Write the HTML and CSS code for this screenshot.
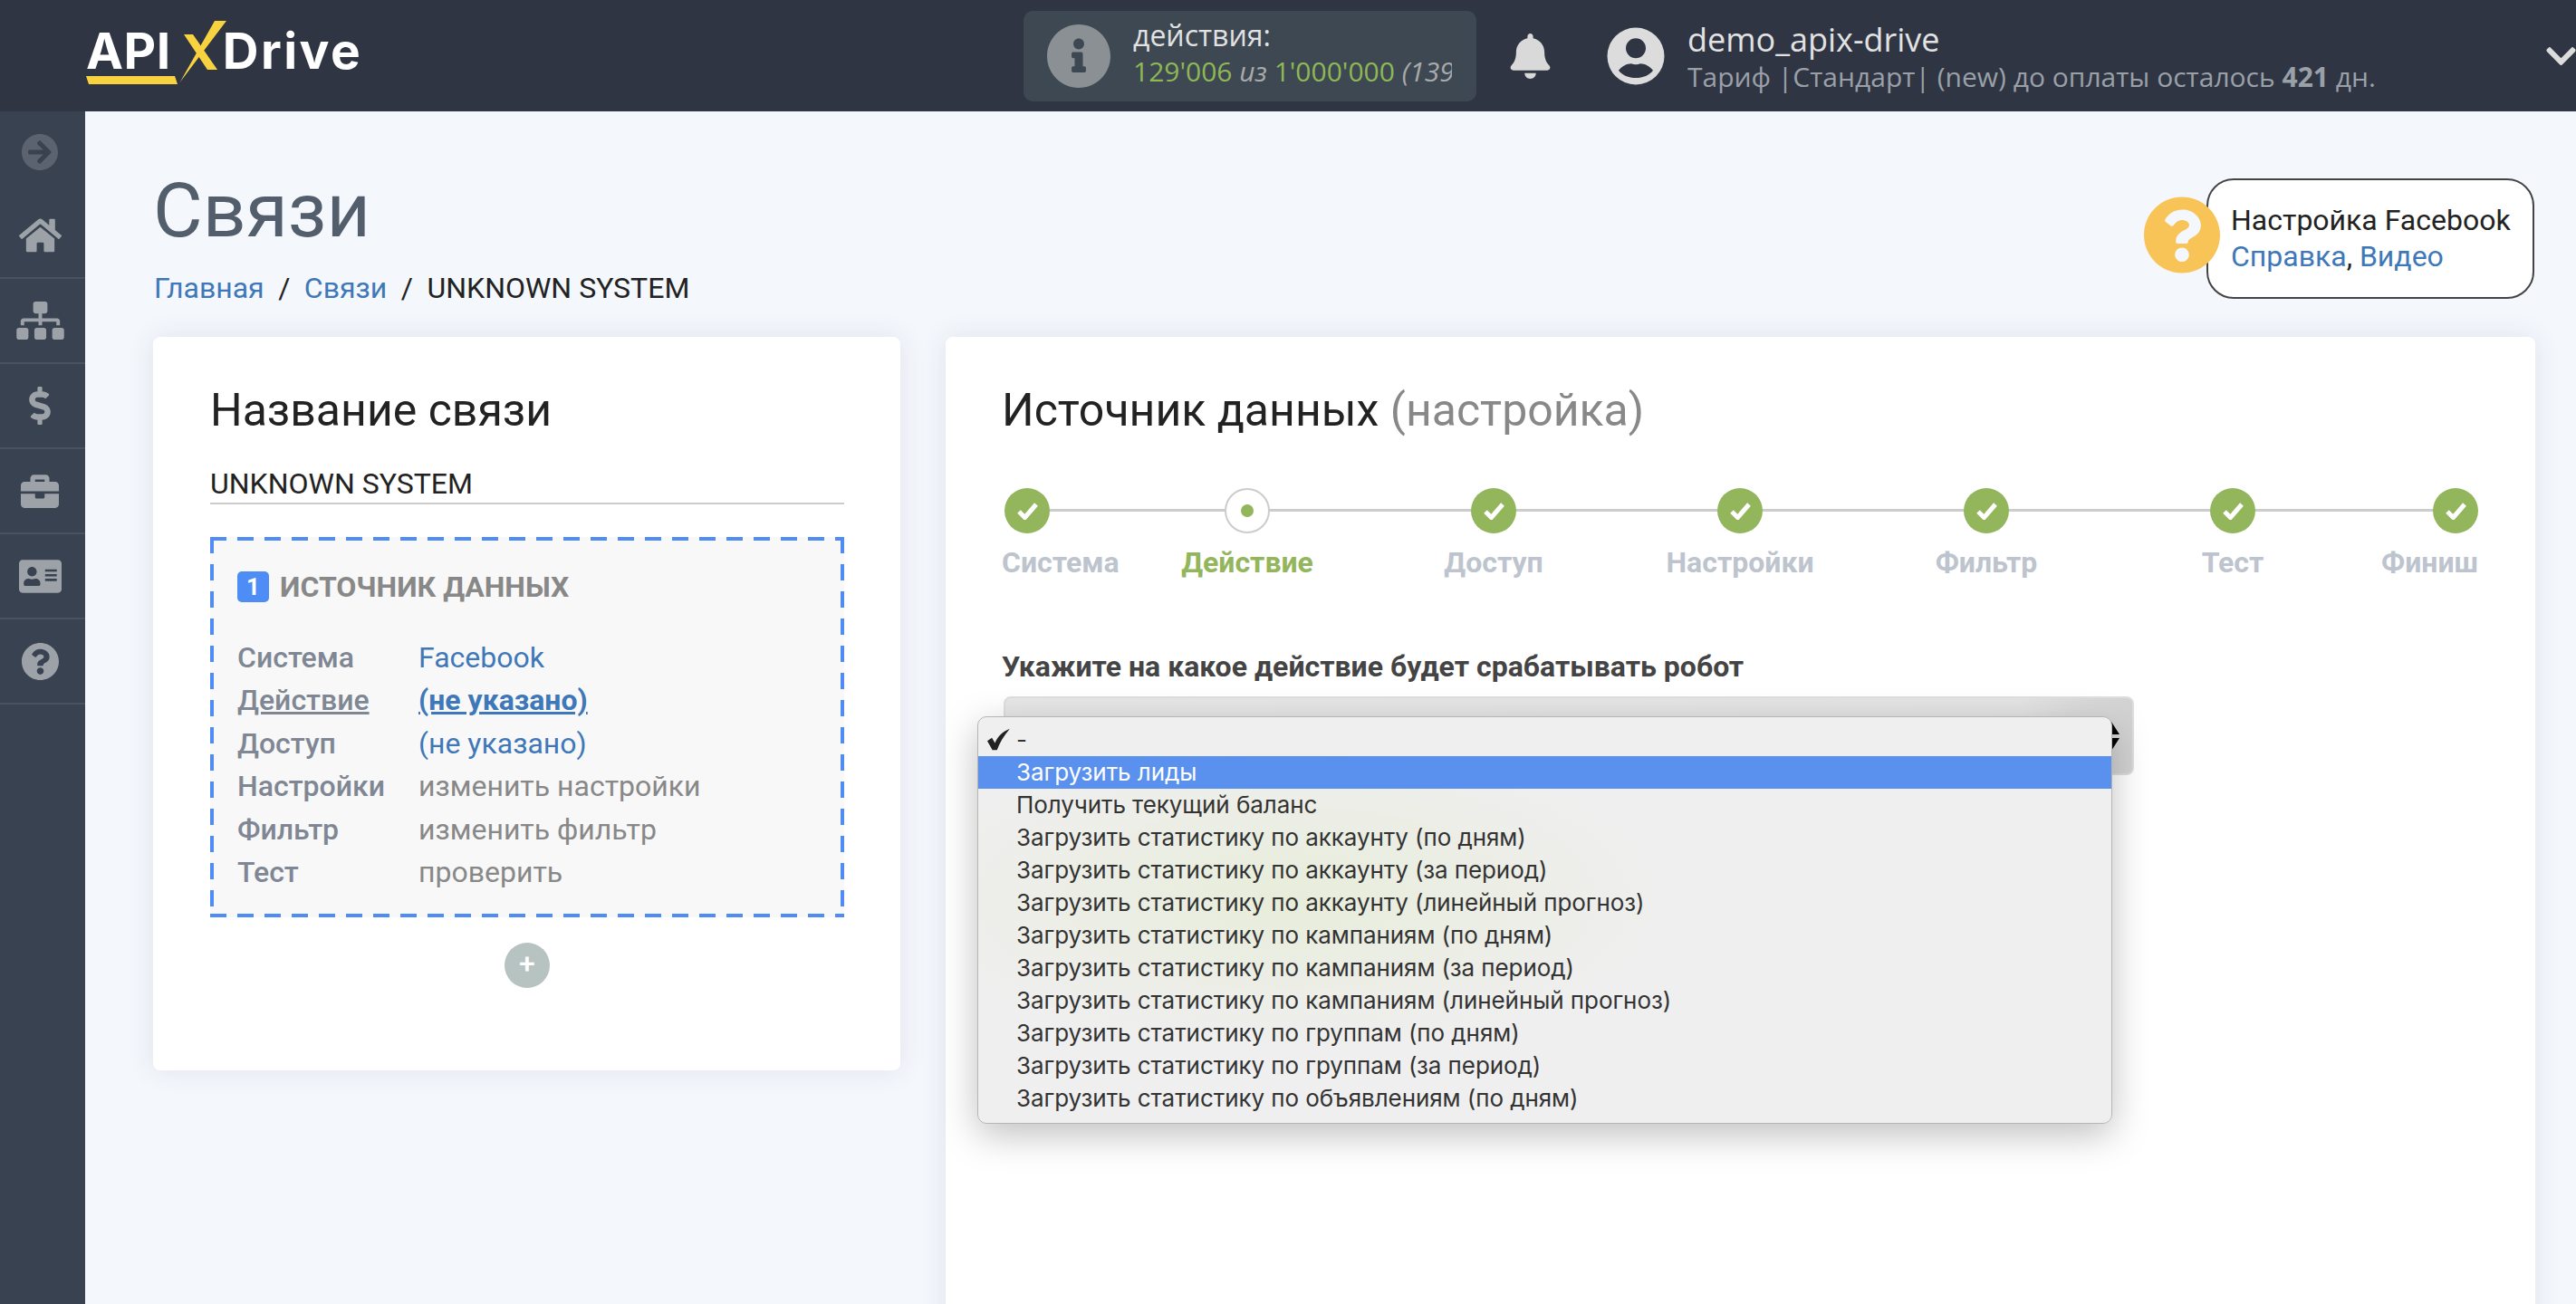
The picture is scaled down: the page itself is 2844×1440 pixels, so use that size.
FILE: index.html
```html
<!DOCTYPE html>
<html lang="ru">
<head>
<meta charset="utf-8">
<title>Связи</title>
<link rel="stylesheet" href="styles.css">
</head>
<body>
<header class="topbar">
  <div class="logo">
    <span class="logo-api">API</span>
    <svg class="logo-x" viewBox="0 0 160 72" aria-hidden="true">
      <polygon points="0,61 98,61 101,70 3,70" fill="#f9d33f"/>
      <polygon points="142,0 155,0 105,66 103,69" fill="#f9d33f"/>
      <polygon points="108,15 118,15 145,54 134,54" fill="#f9d33f"/>
    </svg>
    <span class="logo-drive">Drive</span>
  </div>
  <div class="actions">
    <svg class="actions-icon" viewBox="8 8 496 496"><path d="M256 8C119.043 8 8 119.083 8 256c0 136.997 111.043 248 248 248s248-111.003 248-248C504 119.083 392.957 8 256 8zm0 110c23.196 0 42 18.804 42 42s-18.804 42-42 42-42-18.804-42-42 18.804-42 42-42zm56 254c0 6.627-5.373 12-12 12h-88c-6.627 0-12-5.373-12-12v-24c0-6.627 5.373-12 12-12h12v-64h-12c-6.627 0-12-5.373-12-12v-24c0-6.627 5.373-12 12-12h64c6.627 0 12 5.373 12 12v100h12c6.627 0 12 5.373 12 12v24z"/></svg>
    <div class="actions-text">
      <div class="actions-title">действия:</div>
      <div class="actions-count"><span class="green">129'006</span> <i>из</i> <span class="green">1'000'000</span> <i>(139%)</i></div>
    </div>
  </div>
  <svg class="bell" viewBox="0 0 448 512"><path d="M224 512c35.32 0 63.97-28.65 63.97-64H160.03c0 35.35 28.65 64 63.97 64zm215.39-149.71c-19.32-20.76-55.47-51.99-55.47-154.29 0-77.7-54.48-139.9-127.94-155.16V32c0-17.67-14.32-32-31.98-32s-31.98 14.33-31.98 32v20.84C118.56 68.1 64.08 130.3 64.08 208c0 102.3-36.15 133.53-55.47 154.29-6 6.45-8.66 14.16-8.61 21.71.11 16.4 12.98 32 32.1 32h383.8c19.12 0 32-15.6 32.1-32 .05-7.55-2.61-15.27-8.61-21.71z"/></svg>
  <svg class="avatar" viewBox="0 0 64 64"><path fill-rule="evenodd" d="M32 .5a31.5 31.5 0 1 0 0 63 31.5 31.5 0 0 0 0-63zM32 12.3a11 11 0 1 1 0 22 11 11 0 0 1 0-22zM13 47.7C17 43 22 40.3 27 40.3q5 1.7 10 0C42 40.3 47 43 51 47.7 47 53 40 56 32 56 24 56 17 53 13 47.7z"/></svg>
  <div class="user">
    <div class="user-name">demo_apix-drive</div>
    <div class="user-plan">Тариф |Стандарт| (new) до оплаты осталось <b>421</b> дн.</div>
  </div>
  <svg class="chevron" viewBox="0 122 448 266" preserveAspectRatio="none"><path d="M207.029 381.476L12.686 187.132c-9.373-9.373-9.373-24.569 0-33.941l22.667-22.667c9.357-9.357 24.522-9.375 33.901-.04L224 284.505l154.745-154.021c9.379-9.335 24.544-9.317 33.901.04l22.667 22.667c9.373 9.373 9.373 24.569 0 33.941L240.971 381.476c-9.373 9.372-24.569 9.372-33.942 0z"/></svg>
</header>

<div class="shell">
  <nav class="sidebar">
    <div class="side-first">
      <svg class="ico-arrow" viewBox="8 8 496 496"><path d="M256 8c137 0 248 111 248 248S393 504 256 504 8 393 8 256 119 8 256 8zm-28.9 143.6l75.5 72.4H120c-13.3 0-24 10.7-24 24v16c0 13.3 10.7 24 24 24h182.6l-75.5 72.4c-9.7 9.3-9.9 24.8-.4 34.3l11 10.9c9.4 9.4 24.6 9.4 33.9 0L404.3 273c9.4-9.4 9.4-24.6 0-33.9L271.6 106.3c-9.4-9.4-24.6-9.4-33.9 0l-11 10.9c-9.5 9.6-9.3 25.1.4 34.4z"/></svg>
      <svg class="ico-home" viewBox="0 32 576 448"><path d="M280.37 148.26L96 300.11V464a16 16 0 0 0 16 16l112.06-.29a16 16 0 0 0 15.92-16V368a16 16 0 0 1 16-16h64a16 16 0 0 1 16 16v95.64a16 16 0 0 0 16 16.05L464 480a16 16 0 0 0 16-16V300L295.67 148.26a12.19 12.19 0 0 0-15.3 0zM571.6 251.47L488 182.56V44.05a12 12 0 0 0-12-12h-56a12 12 0 0 0-12 12v72.61L318.47 43a48 48 0 0 0-61 0L4.34 251.47a12 12 0 0 0-1.6 16.9l25.5 31A12 12 0 0 0 45.15 301l235.22-193.74a12.19 12.19 0 0 1 15.3 0L530.9 301a12 12 0 0 0 16.9-1.6l25.5-31a12 12 0 0 0-1.7-16.93z"/></svg>
    </div>
    <div class="side-item"><svg class="ico-map" viewBox="0 0 640 512"><path d="M128 352H32c-17.67 0-32 14.33-32 32v96c0 17.67 14.33 32 32 32h96c17.67 0 32-14.33 32-32v-96c0-17.67-14.33-32-32-32zm-24-80h192v48h48v-48h192v48h48v-57.59c0-21.17-17.23-38.41-38.41-38.41H344v-64h40c17.67 0 32-14.33 32-32V32c0-17.67-14.33-32-32-32H256c-17.67 0-32 14.33-32 32v96c0 17.67 14.33 32 32 32h40v64H94.41C73.23 224 56 241.23 56 262.41V320h48v-48zm264 80h-96c-17.67 0-32 14.33-32 32v96c0 17.67 14.33 32 32 32h96c17.67 0 32-14.33 32-32v-96c0-17.67-14.33-32-32-32zm240 0h-96c-17.67 0-32 14.33-32 32v96c0 17.67 14.33 32 32 32h96c17.67 0 32-14.33 32-32v-96c0-17.67-14.33-32-32-32z"/></svg></div>
    <div class="side-item"><svg class="ico-dollar" viewBox="0 0 288 512"><path d="M209.2 233.4l-108-31.6C88.7 198.2 80 186.5 80 173.5c0-16.3 13.2-29.5 29.5-29.5h66.3c12.2 0 24.2 3.7 34.2 10.5 6.1 4.1 14.3 3.1 19.5-2l34.8-34c7.1-6.9 6.1-18.4-1.8-24.5C238 74.8 207.4 64.1 176 64V16c0-8.8-7.2-16-16-16h-32c-8.8 0-16 7.2-16 16v48h-2.5C45.8 64-5.4 118.7.5 183.6c4.2 46.1 39.4 83.6 83.8 96.6l102.5 30c12.5 3.7 21.2 15.3 21.2 28.3 0 16.3-13.2 29.5-29.5 29.5h-66.3C100 368 88 364.3 78 357.5c-6.1-4.1-14.3-3.1-19.5 2l-34.8 34c-7.1 6.9-6.1 18.4 1.8 24.5 24.5 19.2 55.1 29.9 86.5 30v48c0 8.8 7.2 16 16 16h32c8.8 0 16-7.2 16-16v-48.2c46.6-.9 90.3-28.6 105.7-72.7 21.5-61.6-14.6-124.8-72.5-141.7z"/></svg></div>
    <div class="side-item"><svg class="ico-case" viewBox="0 32 512 448"><path d="M320 336c0 8.84-7.16 16-16 16h-96c-8.84 0-16-7.16-16-16v-48H0v144c0 25.6 22.4 48 48 48h416c25.6 0 48-22.4 48-48V288H320v48zm144-208h-80V80c0-25.6-22.4-48-48-48H176c-25.6 0-48 22.4-48 48v48H48c-25.6 0-48 22.4-48 48v80h512v-80c0-25.6-22.4-48-48-48zm-144 0H192V96h128v32z"/></svg></div>
    <div class="side-item"><svg class="ico-card" viewBox="0 32 576 448"><path d="M528 32H48C21.5 32 0 53.5 0 80v352c0 26.5 21.5 48 48 48h480c26.5 0 48-21.5 48-48V80c0-26.5-21.5-48-48-48zm-352 96c35.3 0 64 28.7 64 64s-28.7 64-64 64-64-28.7-64-64 28.7-64 64-64zm112 236.8c0 10.6-10 19.2-22.4 19.2H86.4C74 384 64 375.4 64 364.8v-19.2c0-31.8 30.1-57.6 67.2-57.6h5c12.3 5.1 25.7 8 39.8 8s27.6-2.9 39.8-8h5c37.1 0 67.2 25.8 67.2 57.6v19.2zM512 312c0 4.4-3.6 8-8 8H360c-4.4 0-8-3.6-8-8v-16c0-4.4 3.6-8 8-8h144c4.4 0 8 3.6 8 8v16zm0-64c0 4.4-3.6 8-8 8H360c-4.4 0-8-3.6-8-8v-16c0-4.4 3.6-8 8-8h144c4.4 0 8 3.6 8 8v16zm0-64c0 4.4-3.6 8-8 8H360c-4.4 0-8-3.6-8-8v-16c0-4.4 3.6-8 8-8h144c4.4 0 8 3.6 8 8v16z"/></svg></div>
    <div class="side-item"><svg class="ico-help" viewBox="8 8 496 496"><path d="M504 256c0 136.997-111.043 248-248 248S8 392.997 8 256C8 119.083 119.043 8 256 8s248 111.083 248 248zM262.655 90c-54.497 0-89.255 22.957-116.549 63.758-3.536 5.286-2.353 12.415 2.715 16.258l34.699 26.31c5.205 3.947 12.621 3.008 16.665-2.122 17.864-22.658 30.113-35.797 57.303-35.797 20.429 0 45.698 13.148 45.698 32.958 0 14.976-12.363 22.667-32.534 33.976C247.128 238.528 216 254.941 216 296v4c0 6.627 5.373 12 12 12h56c6.627 0 12-5.373 12-12v-1.333c0-28.462 83.186-29.647 83.186-106.667 0-58.002-60.165-102-116.531-102zM256 338c-25.365 0-46 20.635-46 46 0 25.364 20.635 46 46 46s46-20.636 46-46c0-25.365-20.635-46-46-46z"/></svg></div>
  </nav>

  <main class="content">
    <div class="page-head">
      <div class="page-titles">
        <h1 class="page-title">Связи</h1>
        <div class="crumbs"><a class="link">Главная</a><span class="sep">/</span><a class="link">Связи</a><span class="sep">/</span><span>UNKNOWN SYSTEM</span></div>
      </div>
      <div class="help">
        <svg class="help-icon" viewBox="8 8 496 496"><circle cx="256" cy="256" r="180" fill="#f4f7fc"/><path fill="#f9c457" d="M504 256c0 136.997-111.043 248-248 248S8 392.997 8 256C8 119.083 119.043 8 256 8s248 111.083 248 248zM262.655 90c-54.497 0-89.255 22.957-116.549 63.758-3.536 5.286-2.353 12.415 2.715 16.258l34.699 26.31c5.205 3.947 12.621 3.008 16.665-2.122 17.864-22.658 30.113-35.797 57.303-35.797 20.429 0 45.698 13.148 45.698 32.958 0 14.976-12.363 22.667-32.534 33.976C247.128 238.528 216 254.941 216 296v4c0 6.627 5.373 12 12 12h56c6.627 0 12-5.373 12-12v-1.333c0-28.462 83.186-29.647 83.186-106.667 0-58.002-60.165-102-116.531-102zM256 338c-25.365 0-46 20.635-46 46 0 25.364 20.635 46 46 46s46-20.636 46-46c0-25.365-20.635-46-46-46z"/></svg>
        <div class="help-box">
          <div>Настройка Facebook</div>
          <div><a class="link">Справка</a>, <a class="link">Видео</a></div>
        </div>
      </div>
    </div>

    <div class="cards">
      <section class="card card-left">
        <h2 class="card-title">Название связи</h2>
        <div class="name-field">UNKNOWN SYSTEM</div>
        <div class="source">
          <div class="source-head"><span class="badge">1</span><span class="source-title">ИСТОЧНИК ДАННЫХ</span></div>
          <dl class="rows">
            <dt>Система</dt><dd class="link">Facebook</dd>
            <dt class="under">Действие</dt><dd class="link under strong">(не указано)</dd>
            <dt>Доступ</dt><dd class="link">(не указано)</dd>
            <dt>Настройки</dt><dd>изменить настройки</dd>
            <dt>Фильтр</dt><dd>изменить фильтр</dd>
            <dt>Тест</dt><dd>проверить</dd>
          </dl>
        </div>
        <div class="add"><span class="add-btn">+</span></div>
      </section>

      <section class="card card-right">
        <h2 class="card-title">Источник данных <span class="muted">(настройка)</span></h2>
        <div class="steps">
          <div class="step step-first"><span class="dot"><svg viewBox="0 0 25 19"><polyline points="3,10 9.5,16.5 22,2"/></svg></span><span class="step-label">Система</span></div>
          <div class="step step-active"><span class="dot"><i></i></span><span class="step-label">Действие</span></div>
          <div class="step"><span class="dot"><svg viewBox="0 0 25 19"><polyline points="3,10 9.5,16.5 22,2"/></svg></span><span class="step-label">Доступ</span></div>
          <div class="step"><span class="dot"><svg viewBox="0 0 25 19"><polyline points="3,10 9.5,16.5 22,2"/></svg></span><span class="step-label">Настройки</span></div>
          <div class="step"><span class="dot"><svg viewBox="0 0 25 19"><polyline points="3,10 9.5,16.5 22,2"/></svg></span><span class="step-label">Фильтр</span></div>
          <div class="step"><span class="dot"><svg viewBox="0 0 25 19"><polyline points="3,10 9.5,16.5 22,2"/></svg></span><span class="step-label">Тест</span></div>
          <div class="step step-last"><span class="dot"><svg viewBox="0 0 25 19"><polyline points="3,10 9.5,16.5 22,2"/></svg></span><span class="step-label">Финиш</span></div>
        </div>
        <div class="question">Укажите на какое действие будет срабатывать робот</div>
        <div class="select">
          <svg class="select-arrows" viewBox="0 0 18 32"><polygon points="9,0 18,14 0,14"/><polygon points="0,18 18,18 9,32"/></svg>
          <ul class="menu">
            <li class="checked"><svg class="tick" viewBox="0 0 23 21"><path d="M0 12l4.500-3 3 5C10 8 14 3 22 0 16 7 12 14 9.500 21H5z"/></svg>-</li>
            <li class="hot">Загрузить лиды</li>
            <li>Получить текущий баланс</li>
            <li>Загрузить статистику по аккаунту (по дням)</li>
            <li>Загрузить статистику по аккаунту (за период)</li>
            <li>Загрузить статистику по аккаунту (линейный прогноз)</li>
            <li>Загрузить статистику по кампаниям (по дням)</li>
            <li>Загрузить статистику по кампаниям (за период)</li>
            <li>Загрузить статистику по кампаниям (линейный прогноз)</li>
            <li>Загрузить статистику по группам (по дням)</li>
            <li>Загрузить статистику по группам (за период)</li>
            <li>Загрузить статистику по объявлениям (по дням)</li>
          </ul>
        </div>
      </section>
    </div>
  </main>
</div>
</body>
</html>
```

FILE: styles.css
```css
* { box-sizing: border-box; }
html, body { margin: 0; padding: 0; height: 1440px; overflow: hidden; }
body { font-family: Roboto, "Liberation Sans", sans-serif; background: #f4f7fc; color: #222; }

.topbar { height: 123px; background: #2f3543; display: flex; align-items: center; position: relative; }
.logo { width: 1130px; padding-left: 95px; display: flex; align-items: baseline; position: relative; height: 123px; padding-top: 26px; flex-shrink: 0; }
.logo-api, .logo-drive { font-family: Inter, Roboto, sans-serif; font-weight: 700; font-size: 55px; line-height: 60px; color: #fff; letter-spacing: 0.5px; }
.logo-drive { margin-left: 57px; letter-spacing: 2.5px; }
.logo-x { position: absolute; left: 95px; top: 23px; width: 160px; height: 72px; }

.actions { width: 500px; height: 100px; background: #3d4852; border-radius: 10px; display: flex; align-items: center; padding-left: 26px; flex-shrink: 0; }
.actions-icon { width: 70px; height: 70px; fill: #8a9094; flex-shrink: 0; }
.actions-text { margin-left: 25px; white-space: nowrap; font-family: "Open Sans", sans-serif; margin-top: -5px; }
.actions-title { font-size: 32px; line-height: 39px; color: #e2e2e2; }
.actions-count { font-size: 30px; line-height: 41px; color: #aaa; width: 352px; overflow: hidden; }
.green { color: #8fb855; }
.bell { width: 45px; height: 50px; fill: #d9d9d9; margin-left: 37px; flex-shrink: 0; }
.avatar { width: 64px; height: 64px; fill: #dcdcdc; margin-left: 62px; flex-shrink: 0; }
.user { margin-left: 25px; font-family: "Open Sans", sans-serif; white-space: nowrap; width: 948px; flex-shrink: 0; }
.user-name { font-size: 36px; line-height: 46px; color: #e2e2e2; }
.user-plan { font-size: 30px; line-height: 36px; color: #9aa0a8; }
.chevron { width: 33px; height: 20px; fill: #dcdcdc; position: absolute; left: 2811px; top: 52px; }

.shell { display: flex; height: 1317px; }
.sidebar { width: 94px; background: #394250; flex-shrink: 0; }
.side-first { height: 185px; border-bottom: 2px solid #4a5261; display: flex; flex-direction: column; align-items: center; padding: 25px 6px 0 0; }
.side-item { height: 94px; border-bottom: 2px solid #4a5261; display: flex; align-items: center; justify-content: center; padding-right: 6px; }
.sidebar svg { fill: #9da1a8; }
.sidebar .ico-arrow { width: 40px; height: 40px; fill: #5b6270; }
.ico-home { width: 47px; height: 38px; margin-top: 53px; }
.ico-map { width: 53px; height: 42px; }
.ico-dollar { width: 24px; height: 42px; }
.ico-case { width: 42px; height: 37px; }
.ico-card { width: 47px; height: 37px; }
.ico-help { width: 41px; height: 41px; }

.content { flex: 1; padding: 0 45px 0 75px; min-width: 0; }
.page-head { height: 249px; display: flex; justify-content: space-between; position: relative; }
.page-title { margin: 0; padding-top: 60px; font-size: 84px; line-height: 100px; font-weight: 400; color: #525e6b; }
.crumbs { margin-top: 15px; padding-left: 1px; font-size: 32px; line-height: 40px; color: #222; white-space: nowrap; }
.sep { margin: 0 15.5px; }
.link { color: #3f78b8; }

.help { display: flex; align-items: center; margin-top: 74px; height: 133px; margin-right: 1px; }
.help-icon { width: 84px; height: 85px; margin-right: -15px; position: relative; z-index: 1; margin-top: -8px; }
.help-box { width: 362px; height: 133px; border: 2px solid #444; border-radius: 30px; background: #fff; padding: 24px 0 0 25px; font-size: 32px; line-height: 40px; color: #222; white-space: nowrap; }

.cards { display: flex; gap: 50px; align-items: flex-start; }
.card { background: #fff; border-radius: 8px; box-shadow: 0 0 30px rgba(50, 60, 90, .10); }
.card-left { width: 825px; height: 810px; padding: 0 62px 0 63px; flex-shrink: 0; }
.card-right { flex: 1; height: 1100px; padding: 0 63px 0 65px; }
.card-title { margin: 0; padding-top: 51px; font-size: 50px; line-height: 60px; font-weight: 400; color: #222; white-space: nowrap; }
.card-right .card-title { margin-left: -3px; }
.muted { color: #888; }

.name-field { margin-top: 33px; height: 41px; border-bottom: 2px solid #ccc; font-size: 32px; line-height: 36px; color: #222; }
.source {
  margin-top: 36px; height: 420px; padding: 36px 30px 0; background-color: #f8f8f8;
  background-image:
    repeating-linear-gradient(90deg, #4f8cf3 0 18px, transparent 18px 30px),
    repeating-linear-gradient(90deg, #4f8cf3 0 18px, transparent 18px 30px),
    repeating-linear-gradient(180deg, #4f8cf3 0 18px, transparent 18px 30px),
    repeating-linear-gradient(180deg, #4f8cf3 0 18px, transparent 18px 30px);
  background-size: 100% 4px, 100% 4px, 4px 100%, 4px 100%;
  background-position: 0 0, 0 100%, 0 0, 100% 0;
  background-repeat: no-repeat;
}
.source-head { display: flex; align-items: center; height: 38px; }
.badge { width: 35px; height: 34px; border-radius: 5px; background: #4e8df5; color: #fff; font-weight: 700; font-size: 26px; line-height: 34px; text-align: center; margin-right: 12px; }
.source-title { font-size: 32px; font-weight: 700; color: #888; white-space: nowrap; }
.rows { margin: 36px 0 0; display: grid; grid-template-columns: 200px 1fr; grid-auto-rows: 47.4px; font-size: 32px; line-height: 47.4px; }
.rows dt { font-weight: 500; color: #7f8794; }
.rows dd { margin: 0; color: #888; }
.rows dd.link { color: #3f78b8; }
.under { text-decoration: underline; }
.strong { font-weight: 700; }
.add { display: flex; justify-content: center; margin-top: 28px; }
.add-btn { width: 50px; height: 50px; border-radius: 50%; background: #b6c3c1; color: #fff; font-size: 32px; line-height: 46px; text-align: center; font-weight: 500; }

.steps { position: relative; margin-top: 56px; display: grid; grid-template-columns: 132px repeat(5, 272px) 135px; }
.steps::before { content: ""; position: absolute; left: 10px; right: 10px; top: 23px; height: 3px; background: #ccc; }
.step { display: flex; flex-direction: column; align-items: center; position: relative; }
.step-first { align-items: flex-start; }
.step-first .step-label { margin-left: -3px; }
.step-last { align-items: flex-end; }
.dot { width: 50px; height: 50px; border-radius: 50%; background: #93b65d; display: flex; align-items: center; justify-content: center; }
.dot svg { width: 25px; height: 19px; fill: none; stroke: #fff; stroke-width: 5; }
.step-active .dot { background: #fff; border: 2px solid #ccc; }
.dot i { width: 14px; height: 14px; border-radius: 50%; background: #93b65d; }
.step-label { margin-top: 12px; font-size: 32px; line-height: 40px; font-weight: 700; color: #bdc4ce; white-space: nowrap; }
.step-active .step-label { color: #93b65d; }

.question { margin-top: 75px; margin-left: -3px; font-size: 32px; line-height: 40px; font-weight: 700; color: #444; white-space: nowrap; }
.select { position: relative; margin-top: 13px; margin-left: -1px; width: 1248px; height: 87px; border: 2px solid #dedede; border-radius: 8px; background: linear-gradient(90deg, #e7e7e7, #e4e4e4 90%, #d2d2d2); }
.select-arrows { position: absolute; right: 14px; top: 26px; width: 18px; height: 32px; fill: #000; }
.menu { position: absolute; left: -31px; top: 20px; width: 1253px; height: 450px; margin: 0; padding: 7px 0; list-style: none; border: 1px solid #b5b5b5; border-radius: 10px; background: radial-gradient(ellipse 420px 170px at 340px 200px, #e8edda, #efefef); box-shadow: 0 12px 40px rgba(0, 0, 0, .25); font-family: Inter, "Liberation Sans", sans-serif; font-size: 26px; letter-spacing: -0.07px; color: #333; }
.menu li { height: 36px; line-height: 36px; padding-left: 42px; position: relative; white-space: nowrap; }
.menu .hot { background: #5a91ee; color: #fff; }
.tick { position: absolute; left: 10px; top: 5px; width: 26px; height: 25px; fill: #222; }
```
